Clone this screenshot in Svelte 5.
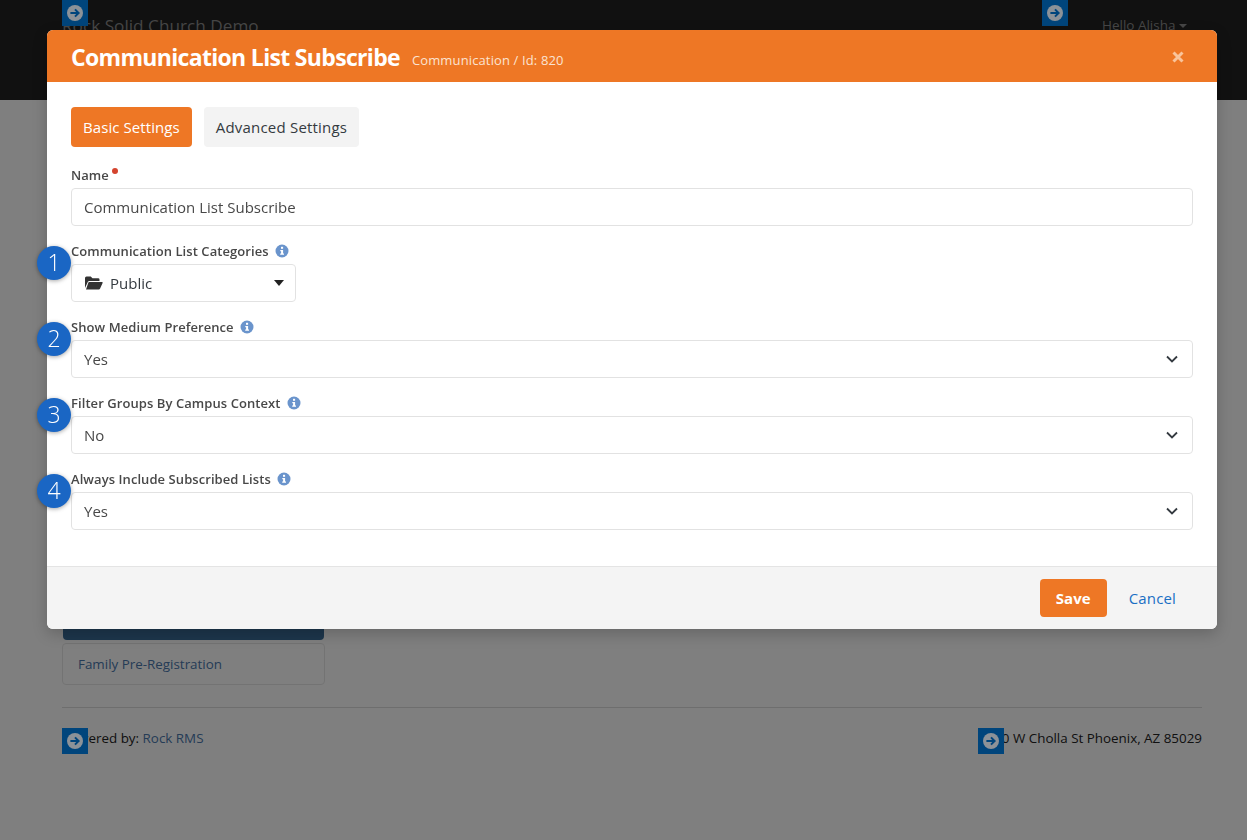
<script lang="ts">
  // Rock RMS block settings modal on top of a dimmed page.
  const fields = [
    { n: 1, label: 'Show Medium Preference', value: 'Yes' },
    { n: 2, label: 'Filter Groups By Campus Context', value: 'No' },
    { n: 3, label: 'Always Include Subscribed Lists', value: 'Yes' },
  ];
  const arrows = ['a1', 'a2', 'a3', 'a4'];
</script>

<div class="page">
  <header class="nav">
    <span class="brand">Rock Solid Church Demo</span>
    <span class="hello">Hello Alisha <i class="caret"></i></span>
  </header>
  <main class="content">
    <div class="side">
      <div class="side-active"></div>
      <div class="side-item">Family Pre-Registration</div>
    </div>
    <footer class="foot">
      <span>Powered by: <span class="foot-link">Rock RMS</span></span>
      <span>7500 W Cholla St Phoenix, AZ 85029</span>
    </footer>
  </main>
</div>

<div class="backdrop"></div>

{#each arrows as a}
  <div class="arrow {a}">
    <svg viewBox="0 0 16 16" width="16" height="16">
      <circle cx="8" cy="8" r="8" fill="#8c9298" />
      <path d="M3.4 8h8M8 4.4 11.6 8 8 11.6" fill="none" stroke="#00457c" stroke-width="2" />
    </svg>
  </div>
{/each}

<div class="modal">
  <div class="modal-head">
    <h1>Communication List Subscribe</h1>
    <small>Communication / Id: 820</small>
    <svg class="close" viewBox="0 0 12 12" width="12" height="12">
      <path d="M1.5 1.5 10.5 10.5M10.5 1.5 1.5 10.5" stroke="#f9c49b" stroke-width="3" />
    </svg>
  </div>

  <div class="modal-body">
    <div class="tabs">
      <span class="tab active">Basic Settings</span>
      <span class="tab wide">Advanced Settings</span>
    </div>

    <div class="group">
      <div class="label">Name <i class="req"></i></div>
      <div class="input">Communication List Subscribe</div>
    </div>

    <div class="group">
      <span class="num">1</span>
      <div class="label">Communication List Categories {@render info()}</div>
      <div class="input picker">
        <svg class="folder" viewBox="0 0 18 14" width="18" height="14">
          <path d="M0 12V2q0-1.500 1.500-1.500h4.200L7.500 2.300h5.700q1.300 0 1.300 1.300V5H4.300q-.9 0-1.400.8L0 12Z" fill="#333" />
          <path d="M4 6h13q1 0 .6 1l-2.500 5.600q-.4.900-1.300.9H1L3.400 6.500Q3.600 6 4 6Z" fill="#333" />
        </svg>
        <span>Public</span>
        <i class="pick-caret"></i>
      </div>
    </div>

    {#each fields as f}
      <div class="group">
        <span class="num">{f.n + 1}</span>
        <div class="label">{f.label} {@render info()}</div>
        <div class="input select">
          <span>{f.value}</span>
          <svg viewBox="0 0 12 8" width="12" height="8">
            <path d="M1 1.500 6 6.500 11 1.500" fill="none" stroke="#343a40" stroke-width="1.800" />
          </svg>
        </div>
      </div>
    {/each}
  </div>

  <div class="modal-foot">
    <span class="save">Save</span>
    <span class="cancel">Cancel</span>
  </div>
</div>

{#snippet info()}
  <svg class="info" viewBox="0 0 14 14" width="14" height="14">
    <circle cx="7" cy="7" r="6.500" fill="#6a94cc" />
    <rect x="6" y="2.800" width="2.100" height="2" fill="#fff" />
    <path d="M5.300 6h2.800v3.500h.9v1.200H5.200V9.500h.9V7.200h-.8Z" fill="#fff" />
  </svg>
{/snippet}

<style>
  :global(body) {
    margin: 0;
    background: #fff;
    font-family: 'Open Sans', sans-serif;
    font-size: 15px;
    color: #484848;
  }

  .page {
    height: 840px;
    overflow: hidden;
  }

  .nav {
    height: 100px;
    background: #222;
    display: flex;
    justify-content: space-between;
    box-sizing: border-box;
    padding: 12px 60px 0 62px;
    color: #8c8c8c;
  }

  .brand {
    font-size: 17.2px;
    line-height: 28px;
  }

  .hello {
    font-size: 13.5px;
    line-height: 26px;
  }

  .caret {
    display: inline-block;
    border: 4.5px solid transparent;
    border-top-color: #8c8c8c;
    border-bottom: 0;
    vertical-align: 2px;
  }

  .content {
    padding: 507px 45px 0 62px;
  }

  .side {
    width: 263px;
  }

  .side-active {
    height: 33px;
    margin: 0 1px;
    background: #3a6c98;
    border-radius: 0 0 4px 4px;
  }

  .side-item {
    margin-top: 3px;
    height: 40px;
    line-height: 40px;
    border: 1px solid #e7e7e7;
    border-radius: 4px;
    padding-left: 15px;
    font-size: 13.4px;
    color: #4a78ad;
  }

  .foot {
    margin-top: 22px;
    border-top: 1px solid #dcdcdc;
    padding-top: 21px;
    display: flex;
    justify-content: space-between;
    font-size: 13.4px;
    line-height: 18px;
    color: #222;
  }

  .foot-link {
    color: #4a78ad;
  }

  .backdrop {
    position: fixed;
    inset: 0;
    background: rgba(0, 0, 0, 0.5);
  }

  .arrow {
    position: absolute;
    width: 26px;
    height: 26px;
    background: #00457c;
    display: flex;
    align-items: center;
    justify-content: center;
  }

  .a1 { left: 62px; top: 0; }
  .a2 { left: 1042px; top: 0; }
  .a3 { left: 62px; top: 728px; }
  .a4 { left: 978px; top: 728px; }

  .modal {
    position: absolute;
    left: 47px;
    top: 30px;
    width: 1170px;
    height: 599px;
    background: #fff;
    border-radius: 6px;
    display: flex;
    flex-direction: column;
    box-shadow: 0 5px 15px rgba(0, 0, 0, 0.2);
  }

  .modal-head {
    height: 52px;
    flex: none;
    box-sizing: border-box;
    background: #ee7725;
    border-radius: 6px 6px 0 0;
    color: #fff;
    display: flex;
    align-items: center;
    padding: 2px 33px 0 24px;
  }

  h1 {
    margin: 0;
    font-size: 23px;
    font-weight: 700;
    letter-spacing: -0.68px;
  }

  small {
    font-size: 13px;
    font-weight: 500;
    letter-spacing: 0.13px;
    margin-left: 12px;
    padding-top: 5px;
    color: #fbe3d2;
  }

  .close {
    margin-left: auto;
  }

  .modal-body {
    flex: 1;
    padding: 25px 24px 0;
  }

  .tabs {
    display: flex;
    gap: 12px;
    margin-bottom: 17px;
  }

  .tab {
    height: 40px;
    line-height: 40px;
    padding: 0 12px;
    border-radius: 4px;
    background: #f3f3f3;
    font-size: 15px;
    letter-spacing: 0.08px;
    color: #343a40;
  }

  .tab.wide {
    letter-spacing: 0.2px;
  }

  .tab.active {
    background: #ee7725;
    color: #fff;
  }

  .group {
    position: relative;
    margin-bottom: 14px;
  }

  .label {
    box-sizing: border-box;
    height: 19px;
    padding-top: 2px;
    line-height: 19px;
    margin-bottom: 5px;
    font-size: 13px;
    font-weight: 600;
    letter-spacing: 0.07px;
    color: #484848;
    white-space: pre;
  }

  .req {
    display: inline-block;
    width: 6px;
    height: 6px;
    border-radius: 50%;
    background: #d4442e;
    vertical-align: 6px;
  }

  .info {
    margin-left: 3px;
    vertical-align: -2px;
  }

  .num {
    position: absolute;
    left: -34px;
    top: 6px;
    width: 34px;
    height: 34px;
    border-radius: 50%;
    background: #1a66c4;
    color: #fff;
    font-size: 23px;
    font-weight: 300;
    line-height: 33px;
    text-align: center;
    box-shadow: 0 1px 4px rgba(0, 0, 0, 0.35);
  }

  .input {
    box-sizing: border-box;
    height: 38px;
    border: 1px solid #e2e2e2;
    border-radius: 4px;
    padding: 0 12px;
    display: flex;
    align-items: center;
    color: #484848;
  }

  .select {
    justify-content: space-between;
    padding-right: 14px;
  }

  .picker {
    width: 225px;
    gap: 7px;
    color: #343a40;
  }

  .folder {
    margin-left: 1px;
  }

  .pick-caret {
    margin-left: auto;
    margin-right: -1px;
    border: 5.5px solid transparent;
    border-top: 6px solid #222;
    border-bottom: 0;
  }

  .modal-foot {
    flex: none;
    height: 63px;
    box-sizing: border-box;
    border-top: 1px solid #e4e4e4;
    background: #f4f4f4;
    border-radius: 0 0 6px 6px;
    display: flex;
    align-items: center;
    justify-content: flex-end;
    padding: 0 41px 0 0;
    gap: 22px;
  }

  .save {
    width: 67px;
    height: 38px;
    line-height: 38px;
    text-align: center;
    border-radius: 4px;
    background: #ee7725;
    color: #fff;
    font-weight: 700;
  }

  .cancel {
    color: #1a6fc4;
    letter-spacing: 0.15px;
  }
</style>
